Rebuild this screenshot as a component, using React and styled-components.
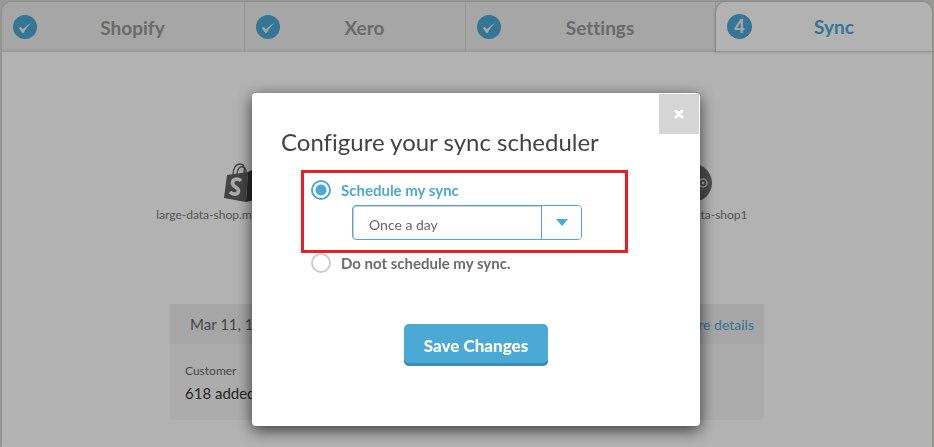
import { useState } from "react";
import styled, { createGlobalStyle } from "styled-components";

const steps = [
	{ name: "Shopify", done: true },
	{ name: "Xero", done: true },
	{ name: "Settings", done: true },
	{ name: "Sync", active: true },
];

const CheckIcon = () => (
	<svg width="24" height="24" viewBox="0 0 24 24" aria-hidden="true">
		<circle cx="12" cy="12" r="12" fill="#4ba9d4" />
		<path d="M6 13.500Q6.500 11.800 8 12.200L10 14.300Q14 9.500 19 7.800Q14 11.500 10.500 18.200Q9.500 18.300 9 17.500Z" fill="#eee" />
	</svg>
);

const ShopifyIcon = () => (
	<svg width="36" height="40" viewBox="0 0 36 40" aria-hidden="true">
		<path d="M3 12 24 9 22 39 0 35Z" fill="#626262" />
		<path d="M24 9 28 7 34 11 36 36 22 39Z" fill="#3c3c3c" />
		<path
			d="M9 12C9 5 12 1 16 1s5 3 4 9M13 11c0-5 3-8 6-7s3 3 3 6"
			fill="none"
			stroke="#666"
			strokeWidth="1.4"
		/>
		<path
			d="M17 18C14 14.500 8.500 16 8.500 20 8.500 24.500 15 24 14.500 28 14 32 9 32 6 29"
			fill="none"
			stroke="#f4f4f4"
			strokeWidth="3.600"
		/>
	</svg>
);

const XeroIcon = () => (
	<svg width="38" height="38" viewBox="0 0 38 38" aria-hidden="true">
		<circle cx="19" cy="19" r="19" fill="#707070" />
		<circle cx="29" cy="19" r="4" fill="none" stroke="#eee" strokeWidth="1.4" />
		<circle cx="29" cy="19" r="1.4" fill="#eee" />
	</svg>
);

const App = () => {
	const [scheduled, setScheduled] = useState(true);
	const [frequency, setFrequency] = useState("Once a day");
	const [open, setOpen] = useState(true);

	return (
		<>
			<GlobalStyle />
			<Page>
				<Wizard>
					<Steps>
						{steps.map((step, i) => (
							<Step key={step.name} $active={step.active}>
								{step.done ? <CheckIcon /> : <StepNumber>{i + 1}</StepNumber>}
								<StepName>{step.name}</StepName>
							</Step>
						))}
					</Steps>
					<Accounts>
						<Account>
							<ShopifyIcon />
							<p>large-data-shop.myshopify.co.uk</p>
						</Account>
						<Account>
							<XeroIcon />
							<p>my-large-data-shop1</p>
						</Account>
					</Accounts>
					<Report>
						<ReportHeader>
							<span>Mar 11, 12:00 PM</span>
							<a href="#details">More details</a>
						</ReportHeader>
						<ReportBody>
							<h4>Customer</h4>
							<p>618 added</p>
						</ReportBody>
					</Report>
				</Wizard>
			</Page>

			{open && (
				<Overlay>
					<Modal role="dialog" aria-labelledby="scheduler-title">
						<ModalTop>
							<h2 id="scheduler-title">Configure your sync scheduler</h2>
							<CloseButton type="button" aria-label="Close" onClick={() => setOpen(false)}>
								<svg width="10" height="10" viewBox="0 0 10 10" aria-hidden="true">
									<path d="M2 2 8 8M8 2 2 8" stroke="#fff" strokeWidth="3" strokeLinecap="round" />
								</svg>
							</CloseButton>
						</ModalTop>
						<Highlight>
							<Option $checked={scheduled}>
								<Radio name="schedule" checked={scheduled} onChange={() => setScheduled(true)} />
								Schedule my sync
							</Option>
							<SelectBox>
								<Select
									aria-label="Sync frequency"
									value={frequency}
									onChange={(e) => setFrequency(e.target.value)}
								>
									<option>Once a day</option>
									<option>Once a week</option>
								</Select>
								<SelectArrow>
									<svg width="12" height="7" viewBox="0 0 12 7" aria-hidden="true">
										<path d="M0 0H12L6 7Z" fill="#4ba9d4" />
									</svg>
								</SelectArrow>
							</SelectBox>
						</Highlight>
						<OtherOption>
							<Option $checked={!scheduled}>
								<Radio name="schedule" checked={!scheduled} onChange={() => setScheduled(false)} />
								Do not schedule my sync.
							</Option>
						</OtherOption>
						<SaveButton type="button">Save Changes</SaveButton>
					</Modal>
				</Overlay>
			)}
		</>
	);
};

export default App;

const GlobalStyle = createGlobalStyle`
	* {
		box-sizing: border-box;
	}

	body {
		margin: 0;
		overflow: hidden;
		font-family: Lato, "Liberation Sans", sans-serif;
		font-variant-ligatures: none;
		background-color: #dcdcda;
	}

	h2, h4, p {
		margin: 0;
		font-weight: 400;
	}
`;

const Page = styled.div`
	min-height: 100vh;
	padding: 2px 2px 0;
	display: flex;
`;

const Wizard = styled.div`
	flex: 1;
	background-color: white;
	border-radius: 10px 10px 0 0;
	box-shadow: 0 0 3px #bbb;
`;

const Steps = styled.div`
	display: grid;
	grid-template-columns: 243fr 221fr 250fr 216fr;
	height: 50px;
	background-color: #eee;
	border-radius: 10px 10px 0 0;
	box-shadow: inset 0 -2px 2px #ddd;
`;

const Step = styled.div`
	display: flex;
	align-items: center;
	padding: 0 16px 0 11px;
	color: ${(props) => (props.$active ? "#4ba9d4" : "#999")};
	background-color: ${(props) => (props.$active ? "white" : "transparent")};
	border-right: ${(props) => (props.$active ? "none" : "1px solid #d8d8d8")};
	border-bottom: ${(props) => (props.$active ? "1px solid #d4d4d4" : "none")};
	border-radius: ${(props) => (props.$active ? "10px 10px 0 0" : "0")};
	box-shadow: ${(props) => (props.$active ? "-1px 0 3px #bbb" : "none")};
`;

const StepNumber = styled.span`
	width: 25px;
	height: 25px;
	line-height: 24px;
	border-radius: 50%;
	text-align: center;
	font-size: 18px;
	font-weight: 900;
	color: #eee;
	background-color: #4ba9d4;
`;

const StepName = styled.span`
	flex: 1;
	text-align: center;
	font-size: 19px;
	font-weight: 700;
`;

const Accounts = styled.div`
	display: grid;
	grid-template-columns: 1fr 1fr;
	padding: 111px 14px 0;
`;

const Account = styled.div`
	display: flex;
	flex-direction: column;
	align-items: center;

	> svg {
		height: 40px;
	}

	> p {
		margin-top: 4px;
		line-height: 16px;
		font-size: 12px;
		color: #777;
	}
`;

const Report = styled.div`
	max-width: 594px;
	margin: 81px auto 0;
	border-radius: 4px;
	background-color: #f7f7f7;
`;

const ReportHeader = styled.div`
	display: flex;
	align-items: center;
	justify-content: space-between;
	height: 40px;
	padding: 0 10px 0 20px;
	font-size: 15px;
	color: #666;
	background-color: #eee;

	> a {
		font-size: 14px;
		color: #4ba9d4;
		text-decoration: none;
	}
`;

const ReportBody = styled.div`
	padding: 18px 15px 17px;

	> h4 {
		line-height: 18px;
		font-size: 12px;
		color: #666;
	}

	> p {
		margin-top: 3px;
		line-height: 20px;
		font-size: 15px;
		color: #333;
	}
`;

const Overlay = styled.div`
	position: fixed;
	inset: 0;
	display: flex;
	align-items: flex-start;
	justify-content: center;
	padding: 93px 0 0 18px;
	background-color: rgba(0, 0, 0, 0.3);
`;

const Modal = styled.div`
	display: flex;
	flex-direction: column;
	width: 448px;
	padding-bottom: 60px;
	background-color: white;
	border-radius: 4px;
	box-shadow: 0 4px 16px rgba(0, 0, 0, 0.7);
`;

const ModalTop = styled.div`
	display: flex;
	justify-content: space-between;
	padding: 1px 1px 0 29px;

	> h2 {
		padding-top: 32px;
		line-height: 32px;
		font-size: 24px;
		color: #444;
	}
`;

const CloseButton = styled.button`
	display: flex;
	align-items: center;
	justify-content: center;
	width: 40px;
	height: 40px;
	padding: 0;
	border: none;
	background-color: #d5d5d5;
	cursor: pointer;
`;

const Highlight = styled.div`
	margin: 12px 72px 0 49px;
	padding: 7px 7px 10px;
	border: 3px solid #ed1c24;
`;

const Option = styled.label`
	display: flex;
	align-items: center;
	gap: 10px;
	height: 20px;
	font-size: 15px;
	font-weight: 700;
	color: ${(props) => (props.$checked ? "#4ba9d4" : "#6b6b6b")};
`;

const Radio = styled.input.attrs({ type: "radio" })`
	appearance: none;
	width: 20px;
	height: 20px;
	margin: 0;
	border: 2px solid #ccc;
	border-radius: 50%;

	&:checked {
		border-color: #4ba9d4;
		background: radial-gradient(circle, #4ba9d4 5px, white 6px);
	}
`;

const SelectBox = styled.div`
	display: grid;
	width: 230px;
	margin: 5px 0 0 41px;

	> * {
		grid-area: 1 / 1;
	}
`;

const Select = styled.select`
	appearance: none;
	height: 35px;
	padding: 4px 50px 0 16px;
	border: 1px solid #4ba9d4;
	border-radius: 4px;
	font-family: inherit;
	font-size: 14px;
	color: #666;
	background-color: white;
	box-shadow: inset 1px 1px 0 #ccc;
`;

const SelectArrow = styled.span`
	display: flex;
	align-items: center;
	justify-content: center;
	justify-self: end;
	width: 40px;
	margin: 1px 1px 1px 0;
	border-left: 1px solid #4ba9d4;
	border-radius: 0 3px 3px 0;
	background-color: white;
	pointer-events: none;
`;

const OtherOption = styled.div`
	padding: 0 0 0 59px;
`;

const SaveButton = styled.button`
	align-self: center;
	width: 144px;
	height: 42px;
	margin-top: 51px;
	padding: 0;
	border: none;
	border-radius: 5px;
	font-family: inherit;
	font-size: 17px;
	font-weight: 900;
	color: white;
	background-color: #4ba9d4;
	box-shadow: inset 0 -3px 0 #3f8fb4;
	cursor: pointer;
`;
